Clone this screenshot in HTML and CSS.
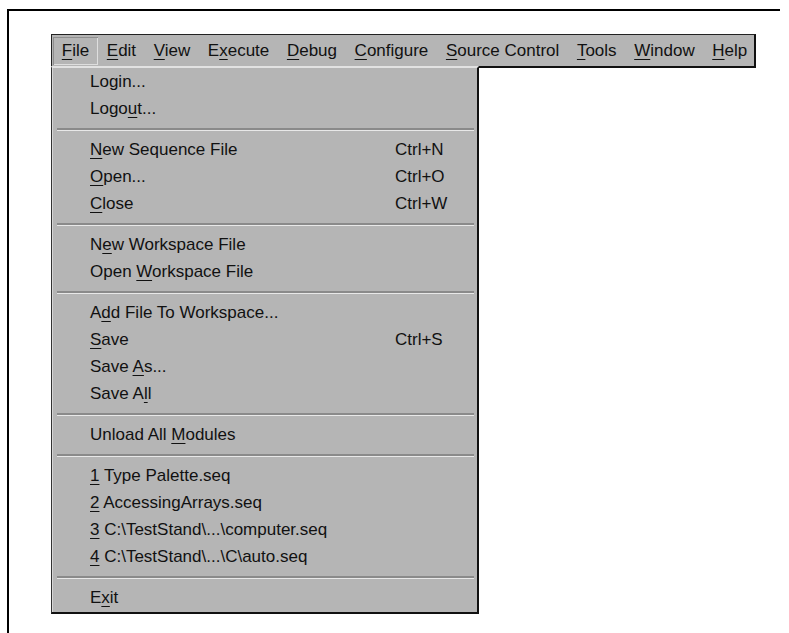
FILE: index.html
```html
<!DOCTYPE html>
<html lang="en">
<head>
<meta charset="utf-8">
<title>File menu</title>
<link rel="stylesheet" href="styles.css">
</head>
<body>
<div class="frame">
  <div class="app">
    <nav class="menubar">
      <span class="menubar-item is-open"><u>F</u>ile</span>
      <span class="menubar-item"><u>E</u>dit</span>
      <span class="menubar-item"><u>V</u>iew</span>
      <span class="menubar-item">E<u>x</u>ecute</span>
      <span class="menubar-item"><u>D</u>ebug</span>
      <span class="menubar-item"><u>C</u>onfigure</span>
      <span class="menubar-item"><u>S</u>ource Control</span>
      <span class="menubar-item"><u>T</u>ools</span>
      <span class="menubar-item"><u>W</u>indow</span>
      <span class="menubar-item"><u>H</u>elp</span>
    </nav>
    <div class="dropdown">
      <div class="item"><span class="label">Login...</span></div>
      <div class="item"><span class="label">Logo<u>u</u>t...</span></div>
      <div class="sep"></div>
      <div class="item"><span class="label"><u>N</u>ew Sequence File</span><span class="key">Ctrl+N</span></div>
      <div class="item"><span class="label"><u>O</u>pen...</span><span class="key">Ctrl+O</span></div>
      <div class="item"><span class="label"><u>C</u>lose</span><span class="key">Ctrl+W</span></div>
      <div class="sep"></div>
      <div class="item"><span class="label">N<u>e</u>w Workspace File</span></div>
      <div class="item"><span class="label">Open <u>W</u>orkspace File</span></div>
      <div class="sep"></div>
      <div class="item"><span class="label">A<u>d</u>d File To Workspace...</span></div>
      <div class="item"><span class="label"><u>S</u>ave</span><span class="key">Ctrl+S</span></div>
      <div class="item"><span class="label">Save <u>A</u>s...</span></div>
      <div class="item"><span class="label">Save A<u>l</u>l</span></div>
      <div class="sep"></div>
      <div class="item"><span class="label">Unload All <u>M</u>odules</span></div>
      <div class="sep"></div>
      <div class="item"><span class="label"><u>1</u> Type Palette.seq</span></div>
      <div class="item"><span class="label"><u>2</u> AccessingArrays.seq</span></div>
      <div class="item"><span class="label"><u>3</u> C:\TestStand\...\computer.seq</span></div>
      <div class="item"><span class="label"><u>4</u> C:\TestStand\...\C\auto.seq</span></div>
      <div class="sep"></div>
      <div class="item"><span class="label">E<u>x</u>it</span></div>
    </div>
  </div>
</div>
</body>
</html>
```

FILE: styles.css
```css
html, body {
  margin: 0;
  background: #fff;
}

body {
  font-family: "Liberation Sans", Arial, sans-serif;
  font-size: 17px;
  color: #111;
}

u {
  text-decoration: underline;
  text-decoration-thickness: 1px;
  text-underline-offset: 3px;
}

/* outer page frame: only the top and left rules are visible */
.frame {
  box-sizing: border-box;
  margin: 9px 0 0 7px;
  width: 773px;
  height: 624px;
  border-top: 2px solid #000;
  border-left: 2px solid #000;
  padding: 23px 0 0 42px;
}

.app {
  position: relative;
  display: inline-block;
}

/* menu bar */
.menubar {
  display: flex;
  box-sizing: border-box;
  height: 34px;
  background: #b5b5b5;
  border: 1px solid #222;
  border-right: 2px solid #111;
  border-bottom: 2px solid #111;
  padding: 1px 0 0 1px;
  align-items: center;
}

.menubar-item {
  white-space: nowrap;
  line-height: 28px;
  padding: 0 8.8px;
}

.menubar-item:last-child {
  padding-right: 7px;
}

/* the open menu's title sits in a sunken box */
.menubar-item.is-open {
  box-shadow: inset 1px 1px 0 #8e8e8e, inset -1px -1px 0 #dedede;
}

/* drop-down File menu */
.dropdown {
  position: absolute;
  left: 0;
  top: 32px;
  box-sizing: border-box;
  width: 428px;
  background: #b5b5b5;
  border-top: 2px solid #e2e2e2;
  border-left: 1px solid #333;
  border-right: 2px solid #111;
  border-bottom: 2px solid #111;
  box-shadow: inset 1px 0 0 #d6d6d6;
  padding: 0 0 1px;
}

.item {
  display: grid;
  grid-template-columns: 305px auto;
  align-items: center;
  height: 27px;
  padding-left: 38px;
  white-space: nowrap;
}

.sep {
  height: 14px;
  margin: 0 3px 0 5px;
  display: flex;
  flex-direction: column;
  justify-content: center;
}

.sep::before {
  content: "";
  display: block;
  height: 2px;
  background: #8a8a8a;
}

.sep::after {
  content: "";
  display: block;
  height: 1px;
  background: #e8e8e8;
}
```
